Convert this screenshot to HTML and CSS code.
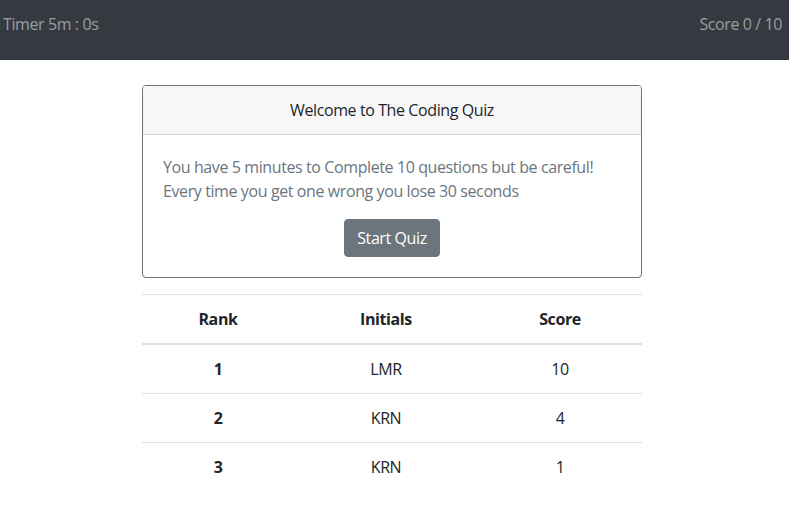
FILE: index.html
```html
<!DOCTYPE html>
<html lang="en">
<head>
<meta charset="utf-8">
<title>Coding Quiz</title>
<link rel="stylesheet" href="styles.css">
</head>
<body>
<nav class="navbar">
  <span class="nav-text">Timer 5m : 0s</span>
  <span class="nav-text">Score 0 / 10</span>
</nav>
<main class="main">
  <section class="card">
    <header class="card-header">Welcome to The Coding Quiz</header>
    <div class="card-body">
      <p class="intro">You have 5 minutes to Complete 10 questions but be careful!<br>Every time you get one wrong you lose 30 seconds</p>
      <div class="actions"><button class="btn">Start Quiz</button></div>
    </div>
  </section>
  <table class="scores">
    <colgroup><col class="c1"><col class="c2"><col class="c3"></colgroup>
    <thead>
      <tr><th>Rank</th><th>Initials</th><th>Score</th></tr>
    </thead>
    <tbody>
      <tr><th>1</th><td>LMR</td><td>10</td></tr>
      <tr><th>2</th><td>KRN</td><td>4</td></tr>
      <tr><th>3</th><td>KRN</td><td>1</td></tr>
    </tbody>
  </table>
</main>
</body>
</html>
```
FILE: styles.css
```css
* { box-sizing: border-box; }
body {
  margin: 0;
  font-family: "Open Sans", "Noto Sans", sans-serif;
  font-size: 16px;
  line-height: 24px;
  letter-spacing: -0.4px;
  color: #212529;
  background: #fff;
}
.navbar {
  height: 60px;
  background: #343a40;
  display: flex;
  justify-content: space-between;
  align-items: flex-start;
  padding: 12px 7px 0 3px;
}
.nav-text { color: rgba(255,255,255,.5); }
.main {
  width: 500px;
  margin: 25px 0 0 142px;
}
.card {
  border: 1px solid #6c757d;
  border-radius: 4px;
  overflow: hidden;
}
.card-header {
  background: #f7f7f7;
  border-bottom: 1px solid rgba(0,0,0,.125);
  padding: 12px 20px;
  text-align: center;
}
.card-body { padding: 20px; }
.intro {
  margin: 0 0 16px;
  color: #6c757d;
}
.actions { display: flex; justify-content: center; }
.btn {
  font: inherit;
  letter-spacing: inherit;
  color: #fff;
  background: #6c757d;
  border: 1px solid #6c757d;
  border-radius: 4px;
  padding: 6px 12px;
  line-height: 24px;
}
.scores {
  width: 500px;
  margin-top: 16px;
  border-collapse: collapse;
  table-layout: fixed;
}
.c1 { width: 152px; }
.c2 { width: 184px; }
.c3 { width: 164px; }
.scores th, .scores td {
  padding: 12px;
  text-align: center;
  border-top: 1px solid #dee2e6;
  line-height: 24px;
}
.scores th { font-weight: 700; }
.scores thead th { border-bottom: 2px solid #dee2e6; }
.scores td { font-weight: 400; }
```
